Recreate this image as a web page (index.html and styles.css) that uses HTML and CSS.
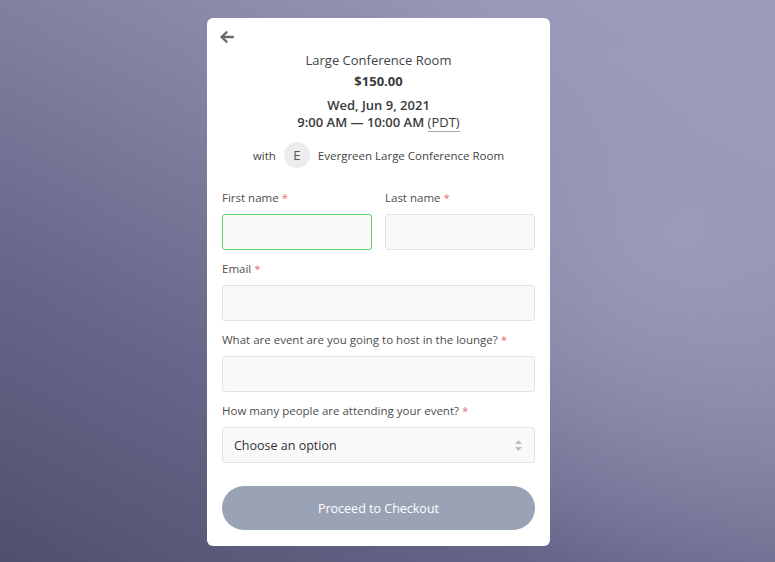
FILE: index.html
```html
<!DOCTYPE html>
<html lang="en">
<head>
<meta charset="utf-8">
<title>Booking</title>
<link rel="stylesheet" href="styles.css">
</head>
<body>
<main class="card">
  <button class="back" aria-label="Back">
    <svg width="15" height="12" viewBox="0 0 15 12"><path d="M14 6H3M7.5 1.3L2.5 6l5 4.7" fill="none" stroke="#6b6b6b" stroke-width="2.4" stroke-linecap="round" stroke-linejoin="round"/></svg>
  </button>
  <h1 class="title">Large Conference Room</h1>
  <div class="price">$150.00</div>
  <div class="when">
    <div>Wed, Jun 9, 2021</div>
    <div>9:00 AM — 10:00 AM <span class="tz">(PDT)</span></div>
  </div>
  <div class="with">
    <span class="with-word">with</span>
    <span class="avatar">E</span>
    <span class="host">Evergreen Large Conference Room</span>
  </div>
  <form class="form">
    <div class="row">
      <div class="field">
        <label>First name <span class="req">*</span></label>
        <div class="input focus"></div>
      </div>
      <div class="field">
        <label>Last name <span class="req">*</span></label>
        <div class="input"></div>
      </div>
    </div>
    <div class="field">
      <label>Email <span class="req">*</span></label>
      <div class="input"></div>
    </div>
    <div class="field">
      <label>What are event are you going to host in the lounge? <span class="req">*</span></label>
      <div class="input"></div>
    </div>
    <div class="field">
      <label>How many people are attending your event? <span class="req">*</span></label>
      <div class="input select">
        <span>Choose an option</span>
        <svg width="9" height="13" viewBox="0 0 9 13"><path d="M4.5 1L8 5H1z M4.5 12L8 8H1z" fill="#bdbdbd"/></svg>
      </div>
    </div>
    <div class="submit">Proceed to Checkout</div>
  </form>
</main>
</body>
</html>
```

FILE: styles.css
```css
* { box-sizing: border-box; }
html, body { height: 100%; }
body {
  margin: 0;
  padding-right: 18px;
  font-family: "Open Sans", "Liberation Sans", sans-serif;
  background:
    radial-gradient(ellipse 380px 340px at 88% 42%, rgba(156, 157, 188, 0.9) 0%, rgba(156, 157, 188, 0) 100%),
    linear-gradient(28deg, #50506d 0%, #66668a 30%, #7e7e9d 55%, #9899b8 85%, #9b9cbb 100%);
  display: flex;
  justify-content: center;
  align-items: flex-start;
}
.card {
  margin-top: 18px;
  width: 343px;
  height: 528px;
  background: #fff;
  border-radius: 6px;
  padding: 10px 15px 16px 15px;
  display: flex;
  flex-direction: column;
  color: #444;
}
.back {
  align-self: flex-start;
  border: 0;
  background: none;
  padding: 0;
  margin: 2px 0 0 -3px;
  height: 16px;
  display: flex;
  align-items: center;
}
.title {
  margin: 7px 0 0;
  font-size: 13px;
  font-weight: 500;
  line-height: 20px;
  text-align: center;
  color: #444;
}
.price {
  margin-top: 1px;
  font-size: 13px;
  font-weight: 700;
  line-height: 20px;
  text-align: center;
  color: #3a3a3a;
}
.when {
  margin-top: 6px;
  font-size: 13px;
  font-weight: 600;
  line-height: 17px;
  text-align: center;
  color: #3a3a3a;
}
.tz {
  font-weight: 500;
  border-bottom: 1px solid #aaa;
}
.with {
  margin-top: 11px;
  display: flex;
  justify-content: center;
  align-items: center;
  font-size: 11.5px;
  font-weight: 500;
  color: #444;
}
.avatar {
  width: 26px;
  height: 26px;
  border-radius: 50%;
  background: #ececec;
  display: flex;
  align-items: center;
  justify-content: center;
  font-size: 13px;
  color: #555;
  margin: 0 8px 0 8px;
}
.form {
  margin-top: 20px;
  display: flex;
  flex-direction: column;
}
.row {
  display: grid;
  grid-template-columns: 1fr 1fr;
  gap: 13px;
}
.field {
  display: flex;
  flex-direction: column;
  margin-bottom: 9px;
}
label {
  font-size: 11.5px;
  font-weight: 500;
  line-height: 20px;
  color: #4d4d4d;
  margin-bottom: 6px;
}
.req { color: #f26b6b; }
.input {
  height: 36px;
  background: #f9f9f9;
  border: 1px solid #e3e3e3;
  border-radius: 3px;
}
.input.focus {
  border: 1.5px solid #67d567;
}
.select {
  display: flex;
  align-items: center;
  justify-content: space-between;
  padding: 0 11px 0 11px;
  font-size: 12.5px;
  font-weight: 500;
  color: #333;
}
.submit {
  margin-top: 14px;
  height: 44px;
  border-radius: 22px;
  background: #9aa2b5;
  color: #fff;
  font-size: 12.5px;
  font-weight: 500;
  display: flex;
  align-items: center;
  justify-content: center;
}
```
